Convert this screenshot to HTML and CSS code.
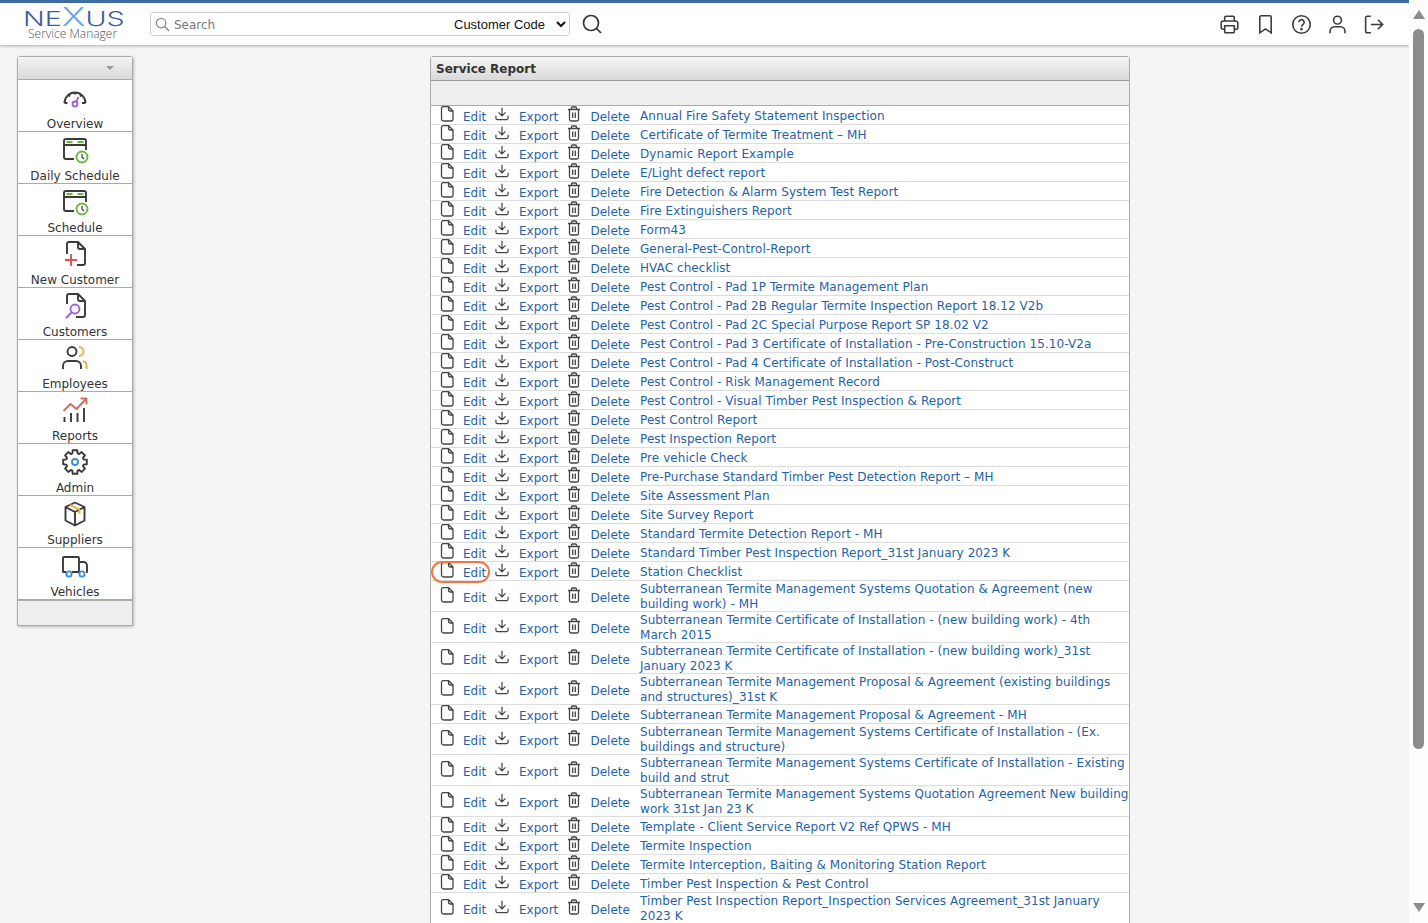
FILE: index.html
```html
<!DOCTYPE html>
<html lang="en">
<head>
<meta charset="utf-8">
<title>Service Report</title>
<link rel="stylesheet" href="styles.css">
</head>
<body>
<svg class="defs" width="0" height="0" aria-hidden="true">
  <symbol id="i-doc" viewBox="0 0 14 16"><path d="M1.500 2.500a2 2 0 0 1 2-2h5l4.500 4.500v8a2 2 0 0 1-2 2h-7.500a2 2 0 0 1-2-2zM8.500 .5v2.500a2 2 0 0 0 2 2h2.500" fill="none" stroke="currentColor" stroke-width="1.300"/></symbol>
  <symbol id="i-export" viewBox="0 0 15 15"><path d="M7.500 .8v8.500M3.800 5.800l3.700 3.700 3.700-3.700M1 9.300v2.700a1.500 1.500 0 0 0 1.500 1.500h10a1.500 1.500 0 0 0 1.500-1.500v-2.700" fill="none" stroke="currentColor" stroke-width="1.300"/></symbol>
  <symbol id="i-trash" viewBox="0 0 14 16"><path d="M1 3.500h12M4.500 3.500v-1.500a1 1 0 0 1 1-1h3a1 1 0 0 1 1 1v1.500M2.500 3.500v10a1.500 1.500 0 0 0 1.500 1.500h6a1.500 1.500 0 0 0 1.500-1.500v-10M5.700 6.500v5.500M8.300 6.500v5.500" fill="none" stroke="currentColor" stroke-width="1.300"/></symbol>
</svg>

<div class="app">
  <div class="page">
    <header class="topbar">
      <div class="logo">
        <div class="logo-word"><span>NE</span><span class="logo-x">X</span><span>US</span></div>
        <div class="logo-sub">Service Manager</div>
      </div>
      <form class="search">
        <svg class="search-glass" viewBox="0 0 16 16"><circle cx="6.500" cy="6.500" r="5" fill="none" stroke="currentColor" stroke-width="1.300"/><path d="M10.200 10.200l4.800 4.800" stroke="currentColor" stroke-width="1.500"/></svg>
        <input class="search-input" type="text" placeholder="Search">
        <select class="search-select"><option>Customer Code</option></select>
      </form>
      <svg class="search-go" viewBox="0 0 20 20"><circle cx="9" cy="9" r="7.500" fill="none" stroke="currentColor" stroke-width="1.700"/><path d="M14.500 14.500l4.500 4.500" stroke="currentColor" stroke-width="1.700"/></svg>
      <nav class="tools">
        <svg class="tool" viewBox="0 0 24 24"><path d="M6.500 8V4a1.500 1.500 0 0 1 1.500-1.500h8a1.500 1.500 0 0 1 1.500 1.500v4M6.500 17.500h-2a2 2 0 0 1-2-2v-5a2.500 2.500 0 0 1 2.500-2.500h14a2.500 2.500 0 0 1 2.500 2.500v5a2 2 0 0 1-2 2h-2M6.500 13.500h11v7a1 1 0 0 1-1 1h-9a1 1 0 0 1-1-1z"/></svg>
        <svg class="tool" viewBox="0 0 24 24"><path d="M5.500 3.500a1.500 1.500 0 0 1 1.500-1.500h10a1.500 1.500 0 0 1 1.500 1.500v18l-6.500-4.500-6.500 4.500z"/></svg>
        <svg class="tool" viewBox="0 0 24 24"><circle cx="12" cy="12" r="10"/><path d="M9 9.500a3 3 0 1 1 4.800 2.400c-1 .8-1.800 1.300-1.800 2.600"/><circle class="dot" cx="12" cy="17.300" r=".6"/></svg>
        <svg class="tool" viewBox="0 0 24 24"><circle cx="12" cy="7" r="4.500"/><path d="M3.500 22v-2.500a5 5 0 0 1 5-5h7a5 5 0 0 1 5 5v2.500"/></svg>
        <svg class="tool" viewBox="0 0 24 24"><path d="M9 2.500h-4a2 2 0 0 0-2 2v15a2 2 0 0 0 2 2h4M9 12h13M17 6.500l5.500 5.500-5.500 5.500"/></svg>
      </nav>
    </header>

    <main class="content">
      <aside class="side">
        <div class="side-head"><span class="side-caret"></span></div>
        <a class="side-item">
          <svg class="side-icon" viewBox="0 0 28 28"><path class="ink" d="M3.500 19a10.500 10.500 0 1 1 21 0M3.500 19h3M21 19h3.500M14 8.500v2M7.500 11l1.500 1.500M20.500 11l-1.500 1.500"/><circle class="violet" cx="14" cy="20" r="2.500"/><path class="violet" d="M15.200 17.800l2.300-5"/></svg>
          <span>Overview</span>
        </a>
        <a class="side-item">
          <svg class="side-icon" viewBox="0 0 28 28"><path class="ink" d="M13 23h-8a2 2 0 0 1-2-2v-16a2 2 0 0 1 2-2h18a2 2 0 0 1 2 2v9M3 9h22"/><path class="green" d="M5.500 6h6M16.500 6h6"/><circle class="green" cx="21" cy="21" r="5.500"/><path class="ink thin" d="M21 18v3l2 2"/></svg>
          <span>Daily Schedule</span>
        </a>
        <a class="side-item">
          <svg class="side-icon" viewBox="0 0 28 28"><path class="ink" d="M13 23h-8a2 2 0 0 1-2-2v-16a2 2 0 0 1 2-2h18a2 2 0 0 1 2 2v9M3 9h22"/><path class="green" d="M5.500 6h6M16.500 6h6"/><circle class="green" cx="21" cy="21" r="5.500"/><path class="ink thin" d="M21 18v3l2 2"/></svg>
          <span>Schedule</span>
        </a>
        <a class="side-item">
          <svg class="side-icon" viewBox="0 0 28 28"><path class="ink" d="M6 14v-10a2 2 0 0 1 2-2h9l7 7v14a2 2 0 0 1-2 2h-6M17 2v5a2 2 0 0 0 2 2h5"/><path class="red" d="M10 14v12M4 20h12"/></svg>
          <span>New Customer</span>
        </a>
        <a class="side-item">
          <svg class="side-icon" viewBox="0 0 28 28"><path class="ink" d="M6 12v-8a2 2 0 0 1 2-2h9l7 7v14a2 2 0 0 1-2 2h-7M17 2v5a2 2 0 0 0 2 2h5"/><circle class="violet" cx="14" cy="17" r="4.500"/><path class="violet" d="M10.500 20.500l-5.500 5.500"/></svg>
          <span>Customers</span>
        </a>
        <a class="side-item">
          <svg class="side-icon" viewBox="0 0 28 28"><circle class="ink" cx="11" cy="7.500" r="4.500"/><path class="ink" d="M2 25v-3a5 5 0 0 1 5-5h8a5 5 0 0 1 5 5v3"/><path class="amber" d="M18 3a4.500 4.500 0 0 1 0 9M22 17a5 5 0 0 1 3.500 5v3"/></svg>
          <span>Employees</span>
        </a>
        <a class="side-item">
          <svg class="side-icon" viewBox="0 0 28 28"><path class="ink" d="M3.500 21v5M10 17v9M16.500 17v9M23 12v14"/><path class="rust" d="M2.500 15l7-7 6 5 9.500-10M19.500 2.500h6v6"/></svg>
          <span>Reports</span>
        </a>
        <a class="side-item">
          <svg class="side-icon" viewBox="0 0 28 28"><path class="ink" d="M16.300 2.200l.3 3.200 1.600.65 2.500-2 3.250 3.250-2 2.500.65 1.570 3.200.33v4.600l-3.200.33-.65 1.570 2 2.500-3.250 3.250-2.500-2-1.600.65-.3 3.200h-4.600l-.3-3.200-1.600-.65-2.500 2-3.250-3.250 2-2.500-.65-1.570-3.200-.33v-4.600l3.200-.33.65-1.570-2-2.500 3.250-3.250 2.500 2 1.600-.65.3-3.200z"/><circle class="blue" cx="14" cy="14" r="3"/></svg>
          <span>Admin</span>
        </a>
        <a class="side-item">
          <svg class="side-icon" viewBox="0 0 28 28"><path class="ink" d="M14 2.500l9.500 4.500v13.500l-9.500 5-9.500-5v-13.500zM4.500 7l9.500 5 9.500-5M14 12v13.500"/><path class="amber" d="M9 4.800l9.500 4.800v4.400"/></svg>
          <span>Suppliers</span>
        </a>
        <a class="side-item">
          <svg class="side-icon" viewBox="0 0 28 28"><path class="ink" d="M5 20h-3v-14a1 1 0 0 1 1-1h14a1 1 0 0 1 1 1v14M11 20h7M18 10h4.500a3.500 3.500 0 0 1 3.500 3.500v6.500h-1"/><circle class="blue" cx="8" cy="22" r="2.600"/><circle class="blue" cx="21" cy="22" r="2.600"/></svg>
          <span>Vehicles</span>
        </a>
        <div class="side-foot"></div>
      </aside>

      <section class="panel">
        <h1 class="panel-title">Service Report</h1>
        <div class="panel-bar"></div>
        <ul class="rows">
          <li class="row"><svg class="i"><use href="#i-doc"/></svg><a class="act">Edit</a><svg class="i"><use href="#i-export"/></svg><a class="act">Export</a><svg class="i"><use href="#i-trash"/></svg><a class="act">Delete</a><a class="name">Annual Fire Safety Statement Inspection</a></li>
          <li class="row"><svg class="i"><use href="#i-doc"/></svg><a class="act">Edit</a><svg class="i"><use href="#i-export"/></svg><a class="act">Export</a><svg class="i"><use href="#i-trash"/></svg><a class="act">Delete</a><a class="name">Certificate of Termite Treatment – MH</a></li>
          <li class="row"><svg class="i"><use href="#i-doc"/></svg><a class="act">Edit</a><svg class="i"><use href="#i-export"/></svg><a class="act">Export</a><svg class="i"><use href="#i-trash"/></svg><a class="act">Delete</a><a class="name">Dynamic Report Example</a></li>
          <li class="row"><svg class="i"><use href="#i-doc"/></svg><a class="act">Edit</a><svg class="i"><use href="#i-export"/></svg><a class="act">Export</a><svg class="i"><use href="#i-trash"/></svg><a class="act">Delete</a><a class="name">E/Light defect report</a></li>
          <li class="row"><svg class="i"><use href="#i-doc"/></svg><a class="act">Edit</a><svg class="i"><use href="#i-export"/></svg><a class="act">Export</a><svg class="i"><use href="#i-trash"/></svg><a class="act">Delete</a><a class="name">Fire Detection &amp; Alarm System Test Report</a></li>
          <li class="row"><svg class="i"><use href="#i-doc"/></svg><a class="act">Edit</a><svg class="i"><use href="#i-export"/></svg><a class="act">Export</a><svg class="i"><use href="#i-trash"/></svg><a class="act">Delete</a><a class="name">Fire Extinguishers Report</a></li>
          <li class="row"><svg class="i"><use href="#i-doc"/></svg><a class="act">Edit</a><svg class="i"><use href="#i-export"/></svg><a class="act">Export</a><svg class="i"><use href="#i-trash"/></svg><a class="act">Delete</a><a class="name">Form43</a></li>
          <li class="row"><svg class="i"><use href="#i-doc"/></svg><a class="act">Edit</a><svg class="i"><use href="#i-export"/></svg><a class="act">Export</a><svg class="i"><use href="#i-trash"/></svg><a class="act">Delete</a><a class="name">General-Pest-Control-Report</a></li>
          <li class="row"><svg class="i"><use href="#i-doc"/></svg><a class="act">Edit</a><svg class="i"><use href="#i-export"/></svg><a class="act">Export</a><svg class="i"><use href="#i-trash"/></svg><a class="act">Delete</a><a class="name">HVAC checklist</a></li>
          <li class="row"><svg class="i"><use href="#i-doc"/></svg><a class="act">Edit</a><svg class="i"><use href="#i-export"/></svg><a class="act">Export</a><svg class="i"><use href="#i-trash"/></svg><a class="act">Delete</a><a class="name">Pest Control - Pad 1P Termite Management Plan</a></li>
          <li class="row"><svg class="i"><use href="#i-doc"/></svg><a class="act">Edit</a><svg class="i"><use href="#i-export"/></svg><a class="act">Export</a><svg class="i"><use href="#i-trash"/></svg><a class="act">Delete</a><a class="name">Pest Control - Pad 2B Regular Termite Inspection Report 18.12 V2b</a></li>
          <li class="row"><svg class="i"><use href="#i-doc"/></svg><a class="act">Edit</a><svg class="i"><use href="#i-export"/></svg><a class="act">Export</a><svg class="i"><use href="#i-trash"/></svg><a class="act">Delete</a><a class="name">Pest Control - Pad 2C Special Purpose Report SP 18.02 V2</a></li>
          <li class="row"><svg class="i"><use href="#i-doc"/></svg><a class="act">Edit</a><svg class="i"><use href="#i-export"/></svg><a class="act">Export</a><svg class="i"><use href="#i-trash"/></svg><a class="act">Delete</a><a class="name">Pest Control - Pad 3 Certificate of Installation - Pre-Construction 15.10-V2a</a></li>
          <li class="row"><svg class="i"><use href="#i-doc"/></svg><a class="act">Edit</a><svg class="i"><use href="#i-export"/></svg><a class="act">Export</a><svg class="i"><use href="#i-trash"/></svg><a class="act">Delete</a><a class="name">Pest Control - Pad 4 Certificate of Installation - Post-Construct</a></li>
          <li class="row"><svg class="i"><use href="#i-doc"/></svg><a class="act">Edit</a><svg class="i"><use href="#i-export"/></svg><a class="act">Export</a><svg class="i"><use href="#i-trash"/></svg><a class="act">Delete</a><a class="name">Pest Control - Risk Management Record</a></li>
          <li class="row"><svg class="i"><use href="#i-doc"/></svg><a class="act">Edit</a><svg class="i"><use href="#i-export"/></svg><a class="act">Export</a><svg class="i"><use href="#i-trash"/></svg><a class="act">Delete</a><a class="name">Pest Control - Visual Timber Pest Inspection &amp; Report</a></li>
          <li class="row"><svg class="i"><use href="#i-doc"/></svg><a class="act">Edit</a><svg class="i"><use href="#i-export"/></svg><a class="act">Export</a><svg class="i"><use href="#i-trash"/></svg><a class="act">Delete</a><a class="name">Pest Control Report</a></li>
          <li class="row"><svg class="i"><use href="#i-doc"/></svg><a class="act">Edit</a><svg class="i"><use href="#i-export"/></svg><a class="act">Export</a><svg class="i"><use href="#i-trash"/></svg><a class="act">Delete</a><a class="name">Pest Inspection Report</a></li>
          <li class="row"><svg class="i"><use href="#i-doc"/></svg><a class="act">Edit</a><svg class="i"><use href="#i-export"/></svg><a class="act">Export</a><svg class="i"><use href="#i-trash"/></svg><a class="act">Delete</a><a class="name">Pre vehicle Check</a></li>
          <li class="row"><svg class="i"><use href="#i-doc"/></svg><a class="act">Edit</a><svg class="i"><use href="#i-export"/></svg><a class="act">Export</a><svg class="i"><use href="#i-trash"/></svg><a class="act">Delete</a><a class="name">Pre-Purchase Standard Timber Pest Detection Report – MH</a></li>
          <li class="row"><svg class="i"><use href="#i-doc"/></svg><a class="act">Edit</a><svg class="i"><use href="#i-export"/></svg><a class="act">Export</a><svg class="i"><use href="#i-trash"/></svg><a class="act">Delete</a><a class="name">Site Assessment Plan</a></li>
          <li class="row"><svg class="i"><use href="#i-doc"/></svg><a class="act">Edit</a><svg class="i"><use href="#i-export"/></svg><a class="act">Export</a><svg class="i"><use href="#i-trash"/></svg><a class="act">Delete</a><a class="name">Site Survey Report</a></li>
          <li class="row"><svg class="i"><use href="#i-doc"/></svg><a class="act">Edit</a><svg class="i"><use href="#i-export"/></svg><a class="act">Export</a><svg class="i"><use href="#i-trash"/></svg><a class="act">Delete</a><a class="name">Standard Termite Detection Report - MH</a></li>
          <li class="row"><svg class="i"><use href="#i-doc"/></svg><a class="act">Edit</a><svg class="i"><use href="#i-export"/></svg><a class="act">Export</a><svg class="i"><use href="#i-trash"/></svg><a class="act">Delete</a><a class="name">Standard Timber Pest Inspection Report_31st January 2023 K</a></li>
          <li class="row row-marked"><svg class="i"><use href="#i-doc"/></svg><a class="act">Edit</a><svg class="i"><use href="#i-export"/></svg><a class="act">Export</a><svg class="i"><use href="#i-trash"/></svg><a class="act">Delete</a><a class="name">Station Checklist</a><span class="ring"></span></li>
          <li class="row"><svg class="i"><use href="#i-doc"/></svg><a class="act">Edit</a><svg class="i"><use href="#i-export"/></svg><a class="act">Export</a><svg class="i"><use href="#i-trash"/></svg><a class="act">Delete</a><a class="name">Subterranean Termite Management Systems Quotation &amp; Agreement (new building work) - MH</a></li>
          <li class="row"><svg class="i"><use href="#i-doc"/></svg><a class="act">Edit</a><svg class="i"><use href="#i-export"/></svg><a class="act">Export</a><svg class="i"><use href="#i-trash"/></svg><a class="act">Delete</a><a class="name">Subterranean Termite Certificate of Installation - (new building work) - 4th March 2015</a></li>
          <li class="row"><svg class="i"><use href="#i-doc"/></svg><a class="act">Edit</a><svg class="i"><use href="#i-export"/></svg><a class="act">Export</a><svg class="i"><use href="#i-trash"/></svg><a class="act">Delete</a><a class="name">Subterranean Termite Certificate of Installation - (new building work)_31st January 2023 K</a></li>
          <li class="row"><svg class="i"><use href="#i-doc"/></svg><a class="act">Edit</a><svg class="i"><use href="#i-export"/></svg><a class="act">Export</a><svg class="i"><use href="#i-trash"/></svg><a class="act">Delete</a><a class="name">Subterranean Termite Management Proposal &amp; Agreement (existing buildings and structures)_31st K</a></li>
          <li class="row"><svg class="i"><use href="#i-doc"/></svg><a class="act">Edit</a><svg class="i"><use href="#i-export"/></svg><a class="act">Export</a><svg class="i"><use href="#i-trash"/></svg><a class="act">Delete</a><a class="name">Subterranean Termite Management Proposal &amp; Agreement - MH</a></li>
          <li class="row"><svg class="i"><use href="#i-doc"/></svg><a class="act">Edit</a><svg class="i"><use href="#i-export"/></svg><a class="act">Export</a><svg class="i"><use href="#i-trash"/></svg><a class="act">Delete</a><a class="name">Subterranean Termite Management Systems Certificate of Installation - (Ex. buildings and structure)</a></li>
          <li class="row"><svg class="i"><use href="#i-doc"/></svg><a class="act">Edit</a><svg class="i"><use href="#i-export"/></svg><a class="act">Export</a><svg class="i"><use href="#i-trash"/></svg><a class="act">Delete</a><a class="name">Subterranean Termite Management Systems Certificate of Installation - Existing build and strut</a></li>
          <li class="row"><svg class="i"><use href="#i-doc"/></svg><a class="act">Edit</a><svg class="i"><use href="#i-export"/></svg><a class="act">Export</a><svg class="i"><use href="#i-trash"/></svg><a class="act">Delete</a><a class="name">Subterranean Termite Management Systems Quotation Agreement New building work 31st Jan 23 K</a></li>
          <li class="row"><svg class="i"><use href="#i-doc"/></svg><a class="act">Edit</a><svg class="i"><use href="#i-export"/></svg><a class="act">Export</a><svg class="i"><use href="#i-trash"/></svg><a class="act">Delete</a><a class="name">Template - Client Service Report V2 Ref QPWS - MH</a></li>
          <li class="row"><svg class="i"><use href="#i-doc"/></svg><a class="act">Edit</a><svg class="i"><use href="#i-export"/></svg><a class="act">Export</a><svg class="i"><use href="#i-trash"/></svg><a class="act">Delete</a><a class="name">Termite Inspection</a></li>
          <li class="row"><svg class="i"><use href="#i-doc"/></svg><a class="act">Edit</a><svg class="i"><use href="#i-export"/></svg><a class="act">Export</a><svg class="i"><use href="#i-trash"/></svg><a class="act">Delete</a><a class="name">Termite Interception, Baiting &amp; Monitoring Station Report</a></li>
          <li class="row"><svg class="i"><use href="#i-doc"/></svg><a class="act">Edit</a><svg class="i"><use href="#i-export"/></svg><a class="act">Export</a><svg class="i"><use href="#i-trash"/></svg><a class="act">Delete</a><a class="name">Timber Pest Inspection &amp; Pest Control</a></li>
          <li class="row"><svg class="i"><use href="#i-doc"/></svg><a class="act">Edit</a><svg class="i"><use href="#i-export"/></svg><a class="act">Export</a><svg class="i"><use href="#i-trash"/></svg><a class="act">Delete</a><a class="name">Timber Pest Inspection Report_Inspection Services Agreement_31st January 2023 K</a></li>
        </ul>
      </section>
    </main>
  </div>
  <div class="scrollbar">
    <span class="sb-up"></span>
    <span class="sb-thumb"></span>
    <span class="sb-down"></span>
  </div>
</div>
</body>
</html>
```

FILE: styles.css
```css
* { box-sizing: border-box; }
html, body { margin: 0; height: 100%; overflow: hidden; }
body { font-family: "DejaVu Sans", sans-serif; font-size: 12px; color: #333; background: #f5f5f5; }
.defs { position: absolute; }
.app { display: flex; height: 923px; }
.page { flex: 1; min-width: 0; height: 923px; overflow: hidden; }

.topbar { height: 45px; background: #fff; border-top: 3px solid #3d6da4; box-shadow: 0 1px 3px rgba(0,0,0,.3); display: flex; align-items: center; position: relative; }
.logo { width: 150px; padding-left: 23px; color: #3f5c9c; }
.logo-word { font-family: Inter, sans-serif; font-weight: 300; font-size: 20px; line-height: 19px; height: 19px; white-space: nowrap; transform: scaleX(1.43); transform-origin: left center; margin-bottom: 1px; }
.logo-x { color: #66a9e6; font-size: 25px; line-height: 19px; }
.logo-sub { font-family: "Open Sans", sans-serif; font-weight: 300; font-size: 12px; line-height: 12px; color: #555; padding-left: 5px; white-space: nowrap; }
.search { width: 420px; height: 24px; border: 1px solid #ccc; border-radius: 3px; display: flex; align-items: center; padding-left: 4px; background: #fff; }
.search-glass { width: 15px; height: 15px; color: #888; flex: none; }
.search-input { flex: 1; min-width: 0; height: 20px; margin-top: 1px; border: 0; outline: 0; font: 12px "DejaVu Sans", sans-serif; padding: 0 0 0 4px; color: #333; }
.search-input::placeholder { color: #777; }
.search-select { width: 119px; height: 20px; border: 0; background: #fff; font: 13px "Liberation Sans", sans-serif; color: #111; outline: 0; }
.search-go { width: 20px; height: 20px; color: #333; margin-left: 12px; }
.tools { margin-left: auto; margin-right: 25px; display: flex; gap: 15px; }
.tool { width: 21px; height: 21px; fill: none; stroke: #3a3a3a; stroke-width: 1.8; }
.tool .dot { fill: #3a3a3a; }

.content { display: flex; align-items: flex-start; padding: 11px 0 0 17px; }
.side { width: 116px; flex: none; border: 1px solid #aaa; border-radius: 3px 3px 0 0; box-shadow: 1px 1px 3px rgba(0,0,0,.25); background: #fff; }
.side-head { height: 23px; background: linear-gradient(#f4f4f4, #d9d9d9); border-bottom: 1px solid #aaa; display: flex; justify-content: flex-end; align-items: center; padding-right: 18px; }
.side-caret { border: 4px solid transparent; border-top: 4px solid #999; border-bottom: 0; }
.side-item { height: 52px; border-bottom: 1px solid #aaa; display: flex; flex-direction: column; align-items: center; color: #333; }
.side-item span { line-height: 14px; margin-top: auto; }
.side-icon { width: 28px; height: 28px; margin-top: 4px; fill: none; stroke-width: 1.900; stroke-linejoin: round; }
.side-icon .ink { stroke: #3a3a3a; fill: none; }
.side-icon .thin { stroke-width: 1.200; }
.side-icon .green { stroke: #6cb644; fill: none; }
.side-icon .violet { stroke: #a55fd0; fill: none; }
.side-icon .red { stroke: #d9534f; fill: none; }
.side-icon .amber { stroke: #e9ae3d; fill: none; }
.side-icon .rust { stroke: #c9705a; fill: none; }
.side-icon .blue { stroke: #3b8ed8; fill: none; }
.side-foot { height: 25px; background: #eee; border-top: 1px solid #aaa; }

.panel { width: 700px; margin-left: 297px; flex: none; border: 1px solid #aaa; border-radius: 3px 3px 0 0; background: #fff; }
.panel-title { margin: 0; height: 24px; padding-left: 5px; font: bold 12px/25px "DejaVu Sans", sans-serif; color: #333; background: linear-gradient(#f6f6f6, #d9d9d9); border-bottom: 1px solid #999; }
.panel-bar { height: 25px; background: #eee; border-bottom: 1px solid #aaa; }
.rows { list-style: none; margin: 0; padding: 0; }
.row { position: relative; display: grid; grid-template-columns: 22px 32px 24px 48px 23.500px 49.500px 1fr; align-items: center; padding-left: 10px; min-height: 19px; border-bottom: 1px solid #ddd; }
.i { width: 14px; height: 16px; color: #444; margin-top: -2px; }
.i:first-child { margin-left: -1px; }
.act { color: #1f62a8; line-height: 15px; margin: 2px 0 -2px; }
.name { color: #1f62a8; line-height: 15px; margin: 1px 0 -1px; letter-spacing: .07px; }
.ring { position: absolute; left: 0; top: -1px; width: 59px; height: 22px; border: 2px solid #f5743f; border-radius: 11px; }

.scrollbar { width: 19px; flex: none; background: #fdfdfd; display: flex; flex-direction: column; align-items: center; height: 923px; padding: 10px 0 11px; }
.sb-up { border: 6px solid transparent; border-bottom: 9px solid #8c8c8c; border-top: 0; }
.sb-thumb { width: 11px; height: 720px; background: #8c8c8c; border-radius: 6px; margin-top: 10px; }
.sb-down { border: 6px solid transparent; border-top: 9px solid #8c8c8c; border-bottom: 0; margin-top: auto; }
```
